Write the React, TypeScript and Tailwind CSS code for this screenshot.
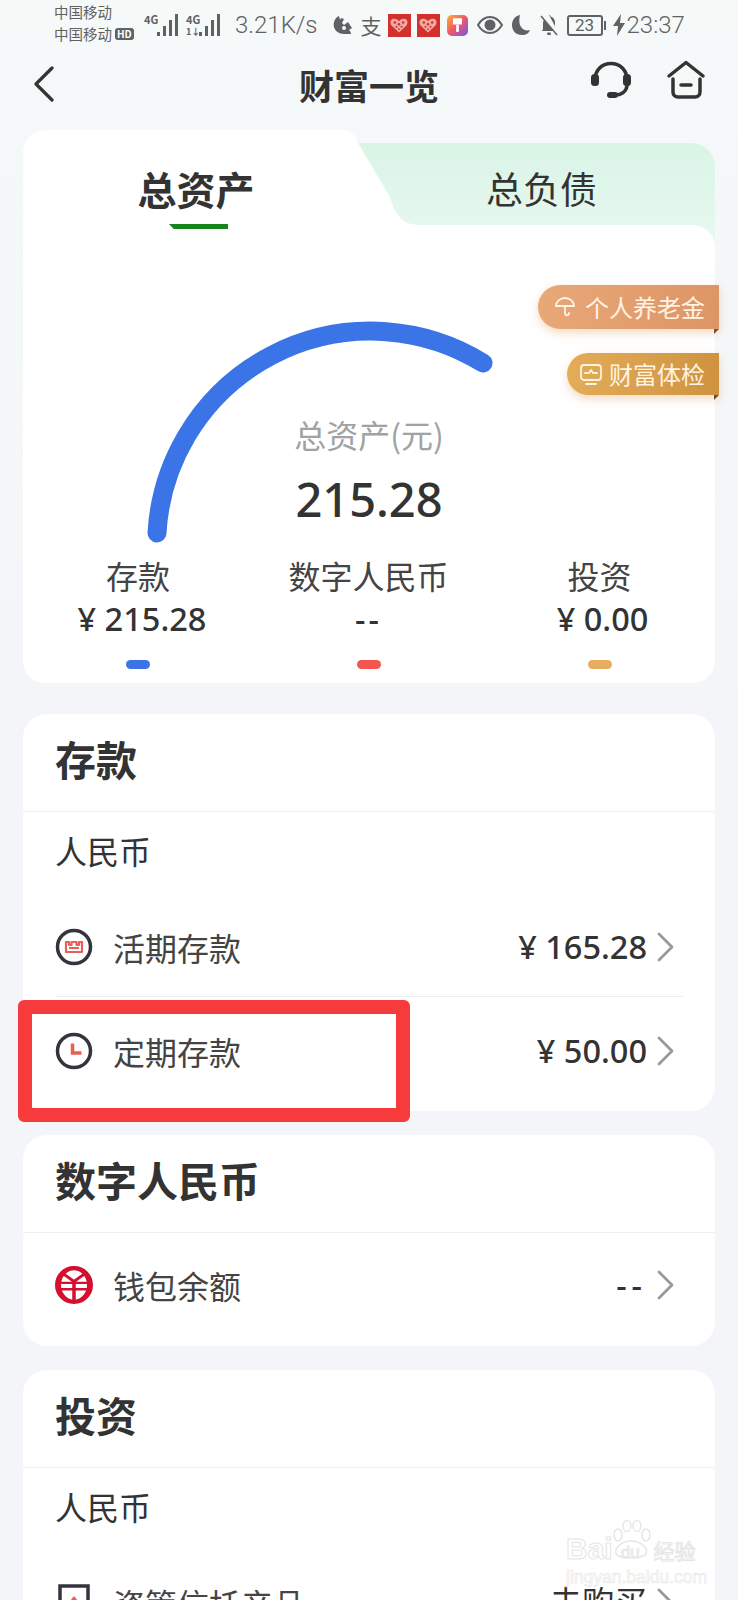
import React from 'react';

const Signal = ({ dual }: { dual?: boolean }) => (
  <div className="relative h-[24px] w-[36px]">
    <span className="absolute left-0 top-0 text-[11px] leading-[13px] font-bold text-[#5f6262]">4G</span>
    {dual && <span className="absolute left-0 top-[13px] text-[9px] leading-[11px] font-bold text-[#5f6262]">1↓</span>}
    <svg viewBox="0 0 36 24" className="absolute left-0 top-0 h-[24px] w-[36px]" fill="#5f6262">
      <rect x="13" y="19" width="3" height="4" />
      <rect x="19" y="13" width="3" height="10" />
      <rect x="25" y="7" width="3" height="16" />
      <rect x="31" y="1" width="3" height="22" />
    </svg>
  </div>
);

const HeartBadge = () => (
  <div className="flex h-[23px] w-[23px] items-center justify-center bg-[#d32f2b]">
    <svg viewBox="0 0 24 24" className="h-[20px] w-[20px]" fill="#eea9a3">
      <path d="M12 21 3 12.500C.8 10 1.600 5.500 5 4.600c2.800-.7 5.500.6 7 3 1.500-2.400 4.200-3.700 7-3 3.400.9 4.200 5.400 2 7.900z" />
      <g fill="#d32f2b">
        <circle cx="7" cy="9" r="1.500" />
        <circle cx="12" cy="11" r="1.500" />
        <circle cx="17" cy="9" r="1.500" />
        <circle cx="9" cy="14" r="1.200" />
        <circle cx="15" cy="14" r="1.200" />
        <circle cx="12" cy="17" r="1" />
      </g>
    </svg>
  </div>
);

const StatusBar = () => (
  <div className="flex h-[50px] items-center pl-[54px] text-[#5f6262]">
    <div className="w-[90px] pb-[5px]">
      <div className="text-[14.500px] leading-[22px]">中国移动</div>
      <div className="flex items-center text-[14.500px] leading-[22px]">
        中国移动
        <span className="ml-[3px] rounded-[3px] bg-[#5f6262] px-[2px] text-[10px] leading-[12px] font-bold text-white">HD</span>
      </div>
    </div>
    <Signal />
    <div className="ml-[6px]">
      <Signal dual />
    </div>
    <span className="ml-[13px] font-['Roboto',sans-serif] text-[24px] leading-[30px] font-light">3.21K/s</span>
    <svg viewBox="0 0 20 20" className="ml-[15px] h-[20px] w-[20px]" fill="#5f6262">
      <path d="M6 1C2 3 0 7 1 12c1 4 5 7 10 7h7c0-2-1-3-2-4l3-2-4-6-4 3-2-2 2-4-3-1-1 2z" />
      <circle cx="11" cy="13" r="2" fill="#f5f8f8" />
    </svg>
    <span className="ml-[8px] text-[21px] leading-[24px]">支</span>
    <div className="ml-[6px]"><HeartBadge /></div>
    <div className="ml-[6px]"><HeartBadge /></div>
    <div className="ml-[7px] flex h-[21px] w-[21px] items-start justify-center rounded-[5px] bg-[linear-gradient(135deg,#f7b733_0%,#f0566b_50%,#6a5cf0_100%)] pt-[3px]">
      <svg viewBox="0 0 12 16" className="h-[15px] w-[11px]" fill="#fff">
        <rect x="1" y="0" width="10" height="7" rx="1" />
        <rect x="4.500" y="7" width="3" height="8" rx="1" />
      </svg>
    </div>
    <svg viewBox="0 0 26 18" className="ml-[9px] h-[18px] w-[26px]">
      <path d="M1 9c3-5 7-8 12-8s9 3 12 8c-3 5-7 8-12 8S4 14 1 9z" fill="none" stroke="#5f6262" strokeWidth="2" />
      <circle cx="13" cy="9" r="5.500" fill="#5f6262" />
    </svg>
    <svg viewBox="0 0 20 22" className="ml-[8px] h-[22px] w-[20px]" fill="#5f6262">
      <path d="M9 1C4 2 1 6 1 11c0 6 4 10 10 10 4 0 7-2 8-5-6 2-13-3-10-15z" />
    </svg>
    <svg viewBox="0 0 20 22" className="ml-[8px] h-[22px] w-[20px]" fill="#5f6262">
      <path d="M10 1c1 0 1.500.6 1.500 1.500C15 3.500 16 6 16 9v3l1 2zM3 17l1-2 0-6c0-1 .2-2 1-3l10 11z" />
      <rect x="8" y="18.500" width="4" height="2.500" rx="1.200" />
      <path d="M2 2l16 19" stroke="#5f6262" strokeWidth="1.500" />
    </svg>
    <div className="ml-[8px] flex h-[21px] w-[36px] items-center justify-center rounded-[3px] border-2 border-[#5f6262] font-['Roboto',sans-serif] text-[17px] leading-[17px]">23</div>
    <span className="ml-[1px] h-[9px] w-[2px] bg-[#5f6262]" />
    <svg viewBox="0 0 12 22" className="ml-[7px] h-[22px] w-[12px]" fill="#5f6262">
      <path d="M8 0 0 12h5l-1 10 8-13H7z" />
    </svg>
    <span className="ml-[2px] font-['Roboto',sans-serif] text-[24px] leading-[30px] font-light">23:37</span>
  </div>
);

const NavBar = () => (
  <div className="relative flex h-[80px] items-center justify-center">
    <svg viewBox="0 0 22 36" className="absolute left-[33px] top-[16px] h-[36px] w-[22px]" fill="none" stroke="#333" strokeWidth="3.200" strokeLinecap="round" strokeLinejoin="round">
      <path d="M19 2 3 18l16 16" />
    </svg>
    <span className="pb-[10px] text-[35px] leading-[44px] font-bold text-[#333]">财富一览</span>
    <svg viewBox="0 0 42 40" className="absolute left-[590px] top-[10px] h-[40px] w-[42px]" fill="none" stroke="#333" strokeWidth="3.500" strokeLinecap="round">
      <path d="M5 20C5 10 12 3.500 21 3.500S37 10 37 20" />
      <rect x="1" y="14" width="8" height="12" rx="3.500" fill="#333" stroke="none" />
      <rect x="33" y="14" width="8" height="12" rx="3.500" fill="#333" stroke="none" />
      <path d="M37 26c-1 6-6 9-12 9" />
      <rect x="17" y="32" width="11" height="6" rx="3" fill="#333" stroke="none" />
    </svg>
    <svg viewBox="0 0 40 40" className="absolute left-[666px] top-[10px] h-[40px] w-[40px]" fill="none" stroke="#333" strokeWidth="3.500" strokeLinecap="round" strokeLinejoin="round">
      <path d="M3 16 20 2.500 37 16" />
      <path d="M7 19v13c0 3 2 5 5 5h17c3 0 5-2 5-5V19" />
      <path d="M15 25h10" />
    </svg>
  </div>
);

const Badge = ({ grad, width, fold, children }: { grad: string; width: string; fold: string; children: React.ReactNode }) => (
  <div className={`relative flex items-center justify-end rounded-l-[22px] pr-[14px] text-[24px] leading-[30px] text-[#fff3e4] shadow-[0_4px_10px_rgba(220,150,90,0.35)] ${grad} ${width}`}>
    {children}
    <span className={`absolute bottom-[-5px] right-0 h-[5px] w-[5px] [clip-path:polygon(0_0,100%_0,0_100%)] ${fold}`} />
  </div>
);

const Stat = ({ label, value, bar, valueClass }: { label: string; value: string; bar: string; valueClass?: string }) => (
  <div className="flex flex-col items-center">
    <span className="text-[32px] leading-[44px] text-[#444]">{label}</span>
    <span className={`font-['Noto_Sans',sans-serif] text-[32.500px] leading-[44px] font-medium text-[#333] ${valueClass ?? ''}`}>{value}</span>
    <span className={`mt-[19px] h-[9px] w-[24px] rounded-full ${bar}`} />
  </div>
);

const Gauge = () => (
  <div className="relative h-[458px] rounded-b-[22px] rounded-tr-[22px] bg-white">
    <svg viewBox="0 0 693 330" className="absolute left-0 top-[83px] h-[330px] w-[693px]" fill="none">
      <path d="M134 225A214 214 0 0 1 460 55" stroke="#3b74e6" strokeWidth="19" strokeLinecap="round" />
    </svg>
    <div className="absolute right-[-4px] top-[60px] flex flex-col items-end gap-[24px]">
      <Badge grad="h-[44px] bg-[linear-gradient(90deg,#e8a878,#dd9565)]" width="w-[181px]" fold="bg-[#7c5230]">
        <svg viewBox="0 0 24 24" className="mr-[8px] h-[24px] w-[24px]" fill="none" stroke="#fff3e4" strokeWidth="1.800" strokeLinecap="round">
          <path d="M3 11a9 8 0 0 1 18 0z" />
          <path d="M12 11v7c0 3 4 3 4 0" />
        </svg>
        个人养老金
      </Badge>
      <Badge grad="h-[42px] bg-[linear-gradient(90deg,#e4ac58,#cf9340)]" width="w-[152px]" fold="bg-[#6f4f22]">
        <svg viewBox="0 0 24 24" className="mr-[6px] h-[24px] w-[24px]" fill="none" stroke="#fff3e4" strokeWidth="1.800" strokeLinecap="round" strokeLinejoin="round">
          <rect x="2" y="3" width="20" height="15" rx="3" />
          <path d="M6 11h4l2-3 2 3h4M7 22h10" />
        </svg>
        财富体检
      </Badge>
    </div>
    <div className="absolute inset-x-0 top-[188px] flex flex-col items-center">
      <span className="text-[32px] leading-[42px] text-[#a0a2a4]">总资产(元)</span>
      <span className="mt-[13px] font-['Noto_Sans',sans-serif] text-[47px] leading-[62px] font-medium text-[#333]">215.28</span>
    </div>
    <div className="absolute inset-x-0 top-[328px] grid grid-cols-[230px_231px_1fr] text-center">
      <Stat label="存款" value="¥ 215.28" bar="bg-[#3b74e6]" valueClass="ml-[8px]" />
      <Stat label="数字人民币" value="--" bar="bg-[#f2564f]" valueClass="tracking-[3px]" />
      <Stat label="投资" value="¥ 0.00" bar="bg-[#e6ae5e]" valueClass="ml-[6px]" />
    </div>
  </div>
);

const Row = ({ icon, label, value, divider, className, valueClass }: { icon: React.ReactNode; label: string; value: string; divider?: boolean; className?: string; valueClass?: string }) => (
  <div className={`mx-[32px] flex h-[100px] items-center ${divider ? 'border-b border-[#ececec]' : ''} ${className ?? ''}`}>
    <div className="flex w-[38px] items-center justify-center">{icon}</div>
    <span className="ml-[20px] flex-1 text-[32px] leading-[44px] text-[#444]">{label}</span>
    <span className={`font-['Noto_Sans','Noto_Sans_CJK_SC',sans-serif] text-[32.500px] leading-[44px] text-[#333] ${valueClass ?? 'font-medium'}`}>{value}</span>
    <svg viewBox="0 0 20 32" className="ml-[8px] mr-[8px] h-[32px] w-[20px]" fill="none" stroke="#999" strokeWidth="2.800" strokeLinecap="round" strokeLinejoin="round">
      <path d="M4 3l13 13L4 29" />
    </svg>
  </div>
);

const RingIcon = ({ children }: { children: React.ReactNode }) => (
  <svg viewBox="0 0 38 38" className="h-[38px] w-[38px]" fill="none">
    <circle cx="19" cy="19" r="16.500" stroke="#33343c" strokeWidth="3.500" />
    {children}
  </svg>
);

const CardTitle = ({ children }: { children: React.ReactNode }) => (
  <div className="flex h-[98px] items-center border-b border-[#efefef] px-[32px] pb-[10px] text-[41px] leading-[52px] font-bold text-[#333]">
    {children}
  </div>
);

const Watermark = () => (
  <div className="absolute left-[566px] top-[1518px] w-[134px] text-transparent [-webkit-text-stroke:1px_#e6e6e6]">
    <div className="relative flex h-[46px] items-end font-['Liberation_Sans',sans-serif]">
      <span className="text-[30px] leading-[30px] font-bold">Bai</span>
      <svg viewBox="0 0 42 40" className="absolute left-[44px] top-0 h-[44px] w-[42px]" fill="none" stroke="#e6e6e6" strokeWidth="1.500">
        <ellipse cx="8" cy="15" rx="4" ry="6" />
        <ellipse cx="17" cy="6" rx="4" ry="5.500" />
        <ellipse cx="27" cy="6" rx="4" ry="5.500" />
        <ellipse cx="36" cy="15" rx="4" ry="6" />
        <path d="M6 34c-2-8 8-13 15-13s18 5 15 13c-3 5-27 5-30 0z" />
      </svg>
      <span className="ml-[8px] text-[17px] leading-[22px]">du</span>
      <span className="ml-[14px] font-['Noto_Sans_CJK_SC',sans-serif] text-[21px] leading-[28px]">经验</span>
    </div>
    <div className="mt-[3px] font-['Liberation_Sans',sans-serif] text-[17.500px] leading-[20px] whitespace-nowrap [-webkit-text-stroke:0.6px_#e6e6e6]">jingyan.baidu.com</div>
  </div>
);

export default function App() {
  return (
    <div className="relative h-[1600px] overflow-hidden bg-[linear-gradient(180deg,#f5f9f8_0%,#f4f5f9_45%,#f4f5f9_100%)] font-['Noto_Sans_CJK_SC','Noto_Sans',sans-serif]">
      <StatusBar />
      <NavBar />
      <div className="mx-[23px]">
        <div className="flex h-[95px] items-start">
          <div className="relative flex h-[95px] w-[334px] justify-center rounded-t-[22px] rounded-tr-[14px] bg-white pl-[12px] pt-[33px]">
            <span className="text-[39px] leading-[50px] font-bold text-[#333]">总资产</span>
            <span className="absolute bottom-[-4px] left-[146px] z-10 h-[5px] w-[59px] bg-[#16851c] [clip-path:polygon(0_0,100%_0,100%_100%,8%_100%)]" />
          </div>
          <div className="relative mt-[13px] flex h-[104px] flex-1 justify-center rounded-tr-[24px] bg-[linear-gradient(180deg,#d9f5e6,#e9f8f1)] pl-[11px] pt-[21px]">
            <span className="text-[37px] leading-[48px] text-[#333]">总负债</span>
            <svg viewBox="0 0 64 82" className="absolute left-0 top-0 h-[82px] w-[64px]" fill="#fff">
              <path d="M0 0h1l32 54c5 18 12 28 31 28H0z" />
            </svg>
          </div>
        </div>
        <Gauge />

        <div className="mt-[31px] h-[397px] rounded-[24px] bg-white">
          <CardTitle>存款</CardTitle>
          <div className="flex h-[76px] items-center px-[32px] text-[32px] leading-[42px] text-[#333]">人民币</div>
          <Row
            divider
            className="mt-[9px]"
            label="活期存款"
            value="¥ 165.28"
            icon={
              <RingIcon>
                <path d="M11 14v10h16V14h-3v3h-2.500v-3h-5v3H14v-3zM14 20h10" stroke="#ea5f55" strokeWidth="2.200" strokeLinejoin="round" />
              </RingIcon>
            }
          />
          <Row
            className="pt-[8px]"
            label="定期存款"
            value="¥ 50.00"
            icon={
              <RingIcon>
                <path d="M17.500 11.500v9.500h9" stroke="#ea5f55" strokeWidth="3.500" />
              </RingIcon>
            }
          />
        </div>

        <div className="mt-[24px] h-[211px] rounded-[24px] bg-white">
          <CardTitle>数字人民币</CardTitle>
          <div className="pt-[2px]">
            <Row
              label="钱包余额"
              value="--"
              valueClass="font-medium tracking-[5px]"
              icon={
                <svg viewBox="0 0 38 54" className="h-[38px] w-[38px]" preserveAspectRatio="none" fill="none" stroke="#d3102e">
                  <ellipse cx="19" cy="27" rx="16" ry="24" strokeWidth="6" />
                  <path d="M8 11l11 11 11-11M4 24h30M4 33h30M19 22v30" strokeWidth="3.500" />
                </svg>
              }
            />
          </div>
        </div>

        <div className="mt-[24px] h-[400px] rounded-t-[24px] bg-white">
          <CardTitle>投资</CardTitle>
          <div className="flex h-[76px] items-center px-[32px] text-[32px] leading-[42px] text-[#333]">人民币</div>
          <div className="mt-[9px]">
            <Row
              label="资管信托产品"
              value="去购买"
              valueClass="font-normal"
              icon={
                <svg viewBox="0 0 32 38" className="h-[38px] w-[32px]" fill="none">
                  <rect x="2" y="2" width="28" height="34" stroke="#33343c" strokeWidth="3.500" />
                  <path d="M16 12l8 10H8z" fill="#ea5f55" />
                </svg>
              }
            />
          </div>
        </div>
      </div>

      <div className="absolute left-[18px] top-[1000px] h-[122px] w-[392px] rounded-[6px] border-[14px] border-[#f73a3c]" />
      <Watermark />
    </div>
  );
}
